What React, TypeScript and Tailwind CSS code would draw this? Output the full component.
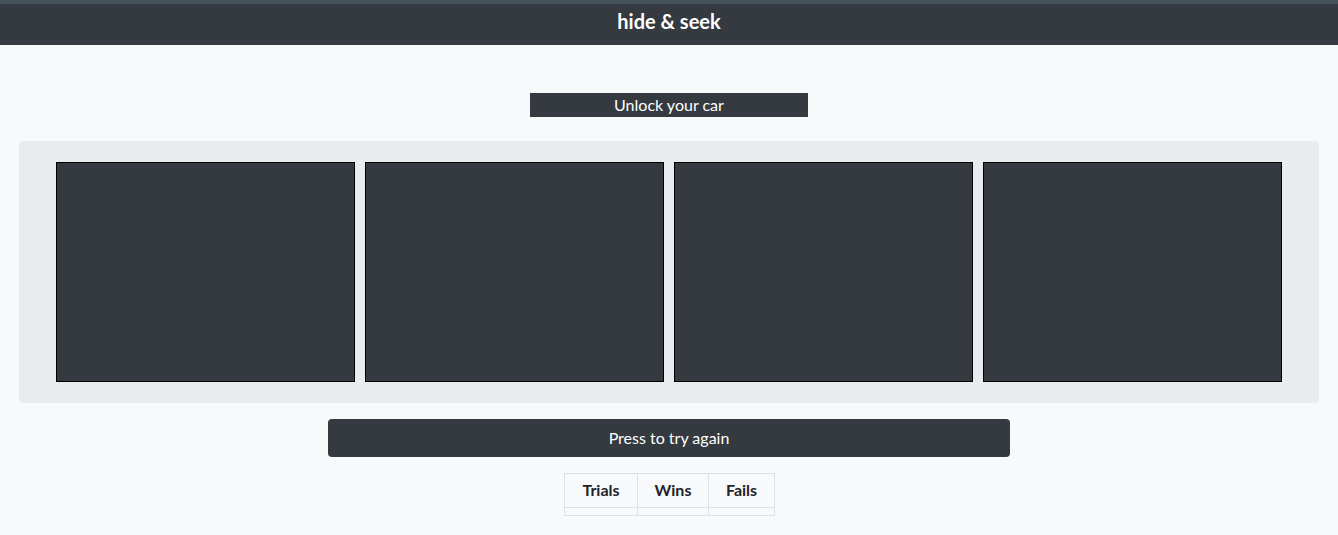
import React from "react";

const cards = [0, 1, 2, 3];

function App() {
  return (
    <div
      className="min-h-[535px] bg-[#f8f9fa] text-[#212529]"
      style={{ fontFamily: "Lato, 'Noto Sans', sans-serif" }}
    >
      <div className="h-[4px] bg-[#44535a]" />
      <header className="h-[41px] bg-[#343a40] flex items-center justify-center pb-[7px]">
        <h1 className="text-[20px] font-bold text-white leading-none">
          hide &amp; seek
        </h1>
      </header>

      <div className="flex justify-center pt-[48px]">
        <div className="w-[278px] h-[24px] bg-[#343a40] text-white text-[16px] flex items-center justify-center">
          Unlock your car
        </div>
      </div>

      <div className="mx-[19px] mt-[24px] bg-[#e9ecef] rounded-[4px] px-[37px] py-[21px] flex gap-[10px]">
        {cards.map((c) => (
          <div
            key={c}
            className="flex-1 h-[220px] bg-[#343a40] border border-black"
          />
        ))}
      </div>

      <div className="flex justify-center mt-[16px]">
        <button className="w-[682px] h-[38px] bg-[#343a40] text-white text-[16px] rounded-[4px]">
          Press to try again
        </button>
      </div>

      <div className="flex justify-center mt-[16px] pl-px">
        <table className="border-collapse text-[16px]">
          <thead>
            <tr className="h-[34px]">
              <th className="w-[73px] border border-[#dee2e6] font-bold pb-[2px]">Trials</th>
              <th className="w-[71px] border border-[#dee2e6] font-bold pb-[2px]">Wins</th>
              <th className="w-[66px] border border-[#dee2e6] font-bold pb-[2px]">Fails</th>
            </tr>
          </thead>
          <tbody>
            <tr className="h-[8px]">
              <td className="border border-[#dee2e6]" />
              <td className="border border-[#dee2e6]" />
              <td className="border border-[#dee2e6]" />
            </tr>
          </tbody>
        </table>
      </div>
    </div>
  );
}

export default App;
